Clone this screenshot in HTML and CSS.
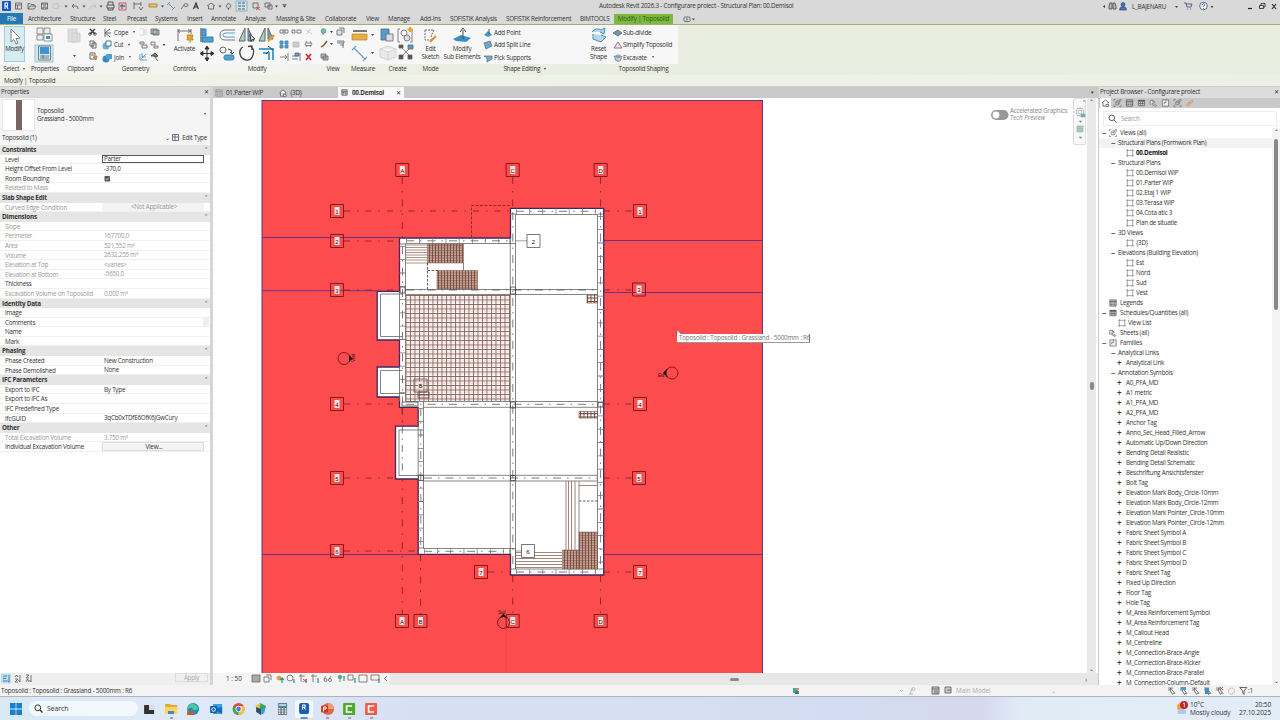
FILE: index.html
```html
<!DOCTYPE html>
<html lang="en">
<head>
<meta charset="utf-8">
<title>Autodesk Revit 2026.3</title>
<link rel="stylesheet" href="styles.css">
</head>
<body>
<svg class="defs" width="0" height="0">
  <defs>
    <symbol id="view" viewBox="0 0 9 9"><path d="M1.5.5v8M7.5.5v8M.5 1.5h8M.5 7.5h8" fill="none" stroke="#777" stroke-width=".9"/><path d="M2 2h5v5H2z" fill="#fff"/></symbol>
    <symbol id="views" viewBox="0 0 9 9"><path d="M.5 2.500v-2h2M6.500.5h2v2M8.500 6.500v2h-2M2.500 8.500h-2v-2M2.500 3.500h3v3h-3zl1.500-1.500h3l-1.500 1.500M7 2v3L5.500 6.500" fill="none" stroke="#666" stroke-width=".7"/></symbol>
    <symbol id="legend" viewBox="0 0 9 9"><path d="M1 1h7v7H1zM1 3h7" fill="#ccc" stroke="#555" stroke-width=".9"/><path d="M2 4.500h2M5 4.500h2M2 6.200h2M5 6.200h2" stroke="#555" stroke-width=".8"/></symbol>
    <symbol id="table" viewBox="0 0 9 9"><path d="M1 1.500h7v6H1zM3.300 3v4.500M5.700 3v4.500M1 5h7" fill="#ddd" stroke="#555" stroke-width=".8"/><path d="M1 1.200h7V3H1z" fill="#555"/></symbol>
    <symbol id="sheet" viewBox="0 0 9 9"><path d="M.8 6.500v-5h3l2 2v1M5.800 3.500h-2v-2M3 4.500l5 3-1 1-4-2z" fill="#eee" stroke="#666" stroke-width=".8"/></symbol>
    <symbol id="family" viewBox="0 0 9 9"><path d="M1 1h7v7H1zM5 1v3H3v2" fill="#f2f2f2" stroke="#666" stroke-width=".8"/></symbol>
    <symbol id="home" viewBox="0 0 9 9"><path d="M.5 4.500L4.500 1l4 3.500M1.700 4v4h3M7.300 4v1M5 6h3v2.300H5z" fill="#fff" stroke="#444" stroke-width=".8"/></symbol>
    <symbol id="filter" viewBox="0 0 9 9"><path d="M1 2h5M1 4h3M3.500 2v3l2 3.500 1-1.500 1.500.5z" fill="#eee" stroke="#666" stroke-width=".8"/></symbol>
  </defs>
</svg>
<div class="app">
  <header class="title">
    <svg class="quick" width="292" height="12" fill="none" stroke="#555" stroke-width=".8">
      <rect x="2" y="1" width="9" height="10" rx="1" fill="#1559c0" stroke="none"/><path d="M5 9V3h2.500v3H5M6.500 6L8 9" stroke="#fff" stroke-width="1.100"/>
      <path d="M15.500 3h6v6h-6zM15.500 5h6M17.500 5v4M28 9V3.500h2l1 1h3V6M28 9l2-3h6l-2 3zM41.500 3h6v6h-6zM43 3v2h3V3M43 9V7h3v2"/>
      <path d="M53 8V4h3l2-1v6zM58 5l2 2" stroke="#bbb"/><path d="M72 6l2-2M72 6l2 2M72 6h4q2 0 2 3"/><path d="M96 6l-2-2M96 6l-2 2M96 6h-4q-2 0-2 3" stroke="#bbb"/>
      <path d="M107 5h7v3h-7zM108 5V2h5v3M108 8v2h5V8" stroke-width="1"/><path d="M119 3h7v7h-7z" stroke="#d33"/><path d="M120 6h5M122 4v5" stroke="#3576af" stroke-width="1.300"/>
      <path d="M134 4h7M134 2v7M141 2v4M139 7l2 3 2-3"/><path d="M149 4h8v3h-8z" fill="#eec56a" stroke="#9b7a36"/><path d="M168 3l6 6M167 5l3-3M172 10l3-3" stroke="#3f83b5"/><path d="M181 9l3-4M184 5a2 1.500 0 1 1 0 .1"/>
      <path d="M193.500 9l2.500-6 2.300 6M194.300 7h3.200" stroke="#333" stroke-width="1.200"/>
      <path d="M207 6l4-3 4 3M208.500 5.500V9h5V5.500M226 6l2.500-3L231 6l-2.500 3zM228.500 8v2"/><path d="M236 1h11v10h-11z" fill="#cbe5ef" stroke="#78abc0"/><path d="M238 3h3M238 6h3M238 9h3M242 3h3M242 6h3M242 9h3" stroke="#333"/>
      <path d="M253 3h5v5h-5zM265 3h5v4h-5zM268 5h4v4h-4z"/><path d="M256 7l4 3M260 7l-4 3" stroke="#d33"/>
      <path d="M64.500 5.500h3l-1.500 2zM82.500 5.500h3l-1.500 2zM99.500 5.500h3l-1.500 2zM161 5.500h3l-1.500 2zM218.500 5.500h3l-1.500 2zM275 5.500h3l-1.500 2zM282.500 5.500h4l-2 2z" fill="#444" stroke="none"/><path d="M282.500 4.500h4"/>
    </svg>
    <span class="doc">Autodesk Revit 2026.3 - Configurare proiect - Structural Plan: 00.Demisol</span>
    <svg width="32" height="12"><path d="M3 5l-2 1.500L3 8z" fill="#333"/><path d="M7 9V6l1-3h2v6zM11 9V3h2l1 3v3z" fill="#bbb" stroke="#444" stroke-width=".8"/><circle cx="21" cy="4.500" r="2" fill="#5271ac" stroke="#24427d" stroke-width=".6"/><path d="M17.500 10q0-3.500 3.500-3.500t3.500 3.500z" fill="#5271ac" stroke="#24427d" stroke-width=".6"/></svg>
    <span class="user">L_BAJENARU</span>
    <svg width="110" height="12" fill="none" stroke="#444" stroke-width=".8"><path d="M6 6h3l-1.500 2z" fill="#444" stroke="none"/><path d="M15 3h2l1 4h4l1-3h-6M18 9h1M21 9h1" stroke="#3b4777"/><circle cx="34.500" cy="6" r="3.800" fill="#f3f5fa" stroke="#3b5277"/><path d="M33.300 5q0-1.300 1.200-1.300t1.200 1-1.200 1.500v.8M34.500 8v.8" stroke="#2c559b"/><path d="M41.500 6h3l-1.500 2z" fill="#444" stroke="none"/><path d="M79 8.500h4" stroke="#222" stroke-width="1.200"/><path d="M90.500 5.500h4v3h-4zM92 5V3.500h4V7h-1" stroke="#222"/><path d="M103 4l4 5M107 4l-4 5" stroke="#222" stroke-width="1.100"/></svg>
  </header>
  <nav class="tabs">
    <b class="file">File</b><span style="width:42px">Architecture</span><span style="width:33px">Structure</span><span style="width:24px">Steel</span><span style="width:28px">Precast</span><span style="width:32px">Systems</span><span style="width:24px">Insert</span><span style="width:34px">Annotate</span><span style="width:31px">Analyze</span><span style="width:49px">Massing &amp; Site</span><span style="width:41px">Collaborate</span><span style="width:22px">View</span><span style="width:32px">Manage</span><span style="width:30px">Add-Ins</span><span style="width:56px">SOFiSTiK Analysis</span><span style="width:74px">SOFiSTiK Reinforcement</span><span style="width:34px">BIMTOOLS</span><b class="context">Modify | Toposolid</b>
    <svg width="24" height="12" fill="none" stroke="#555" stroke-width=".8"><rect x="11" y="4" width="6" height="4.500" rx="1"/><path d="M13.500 5l1.500 1.200-1.500 1.300zM19 5.500h3l-1.500 2z" fill="#444" stroke="none"/></svg>
  </nav>
  <section class="ribbon">
    <div class="panel" style="width:28px"><div class="body"><div class="modify"><svg width="18" height="18"><path d="M5 2v13l3-2.500 2 4.500 2-1-2-4.500 4-.5z" fill="#fff" stroke="#666" stroke-width=".8"/></svg>Modify</div></div><h4>Select <i></i></h4></div>
    <div class="panel" style="width:34px"><div class="body"><svg width="34" height="39"><rect x="7" y="20" width="18" height="17" fill="#cfe8f2" stroke="#8bbdd2" stroke-width=".8"/><path d="M9 3h6v6H9zM16 3h6v6h-6zM9 10h6v5H9z" fill="#eee" stroke="#777" stroke-width=".8"/><path d="M16 9h8v7h-8z" fill="#fff" stroke="#777" stroke-width=".8"/><path d="M18 11h4v3h-4zM12 22h9v7h-9z" fill="#3d94d1"/><path d="M10.500 21h12v14h-12zM12 31h9M12 33h9M15 30v4" fill="none" stroke="#666" stroke-width=".8"/></svg></div><h4>Properties</h4></div>
    <div class="panel" style="width:37px"><div class="body"><svg width="37" height="39" fill="none" stroke="#444" stroke-width=".8"><path d="M6 4h9v13H6zM10 8h8v9h-8z" fill="#ddd" stroke="#ccc"/><path d="M11 30h3l-1.500 2z" fill="#444" stroke="none"/><path d="M28 4l5 5M33 4l-5 5" stroke-width="1.500"/><circle cx="28" cy="9" r="1.300"/><circle cx="33" cy="9" r="1.300"/><path d="M28 16h4v5h-4zM30 18h4v5h-4zM28 28h5v6h-5zM29 30h3" fill="#fff"/><path d="M31 32l4-1-1 4z" fill="#d8a638" stroke="#a77d20"/></svg></div><h4>Clipboard</h4></div>
    <div class="panel" style="width:73px"><div class="body geo">
      <div class="cmds"><p><svg width="14" height="10"><path d="M5 1v8M5 5l5-4M5 5l5 4M5 5h6" fill="none" stroke="#666"/></svg>Cope<i></i></p><p><svg width="14" height="10"><circle cx="6" cy="6" r="3.500" fill="#72add0"/><path d="M6 1h5v5H6z" fill="#fff" stroke="#477891"/></svg>Cut<i></i></p><p><svg width="14" height="10"><circle cx="6" cy="6" r="3.500" fill="#348bc4"/><path d="M6 1h6v5H6z" fill="#4f9fcf"/></svg>Join<i></i></p></div>
      <svg width="34" height="39" fill="none" stroke="#666" stroke-width=".8"><path d="M4 4h4v6H4M10 4v6" stroke="#ccc"/><path d="M15 4h6v5h-6zM17 5h6v5h-6z" fill="#aac9d6"/><path d="M4 17h4v2H4zM6 20h5v3H6zM15 17h4v3h-4zM18 21h4v2h-4z" fill="#eee"/><path d="M26.500 19h3l-1.500 2z" fill="#444" stroke="none"/><path d="M4 29v6h7M5 34l5-5M6 28v4h4" stroke="#438bc0"/><path d="M15 31l4-3 3 3-2 1-2-1zM18 31l4 5" stroke="#444" fill="#777"/></svg>
    </div><h4>Geometry</h4></div>
    <div class="panel" style="width:25px"><div class="body big"><svg width="20" height="19" fill="none" stroke="#666" stroke-width=".9"><path d="M3 3v12M16 3v5M3 5h12M5 3.500L3 5l2 1.500M13 3.500L16 5l-3 1.500"/><path d="M12 9h6l-1 4h1v1h-6v-1h1zM15 14v3" fill="#e8a82d" stroke="#bd861f"/></svg>Activate</div><h4>Controls</h4></div>
    <div class="panel" style="width:120px"><div class="body"><svg width="120" height="39" fill="none" stroke="#666" stroke-width="1">
      <path d="M4 3v14" stroke="#333"/><path d="M5 4h4v7H5zM5 12h11v5H5z" fill="#4ba0d4" stroke="#3a7cac"/>
      <path d="M38 5H28q-5 0-5 5t5 5h10" stroke="#777"/><path d="M38 8H29q-3 0-3 2t3 2h9" stroke="#53a3cc"/>
      <path d="M48 3v13h-6z" fill="#a7d0c4"/><path d="M51 3v13h6z" fill="#62a6cf"/><path d="M53 9l5 5-3 .5-1 2z" fill="#ddd" stroke="#444"/>
      <path d="M68 3v13h-6z" fill="#a7d0c4"/><path d="M71 3v11h5z" fill="#62a6cf"/><path d="M71 16l6-6" stroke="#e19c27" stroke-width="2.500"/>
      <path d="M10 22v13M3.500 28.500h13M10 21l-2 3h4zM10 36l-2-3h4zM3 28.500l3-2v4zM17 28.500l-3-2v4z" stroke="#333" fill="#333"/>
      <circle cx="26" cy="25" r="3"/><path d="M31 24q4 0 4 4M33 27l2 2 2-2" stroke="#444"/><rect x="27" y="30" width="10" height="5" rx="2" fill="#4da5d4" stroke="#3b84b0"/>
      <path d="M46 22q-4 2-3 7t6 6 7-5-2-8M51 21.500l4-.5v4" stroke="#444" stroke-width="1.300"/>
      <path d="M62 24h14v11M66 28h6v7" stroke="#4ba0d4" stroke-width="2"/><path d="M71 21l5 4M72 26l-3 3" stroke="#444"/>
      <g stroke-width=".8"><path d="M83 5h3v3h-3zM88 5h3v3h-3zM87 4v6M95 5h3v3h-3zM100 5h4v3h-4z"/><path d="M109 5l6 4M110 9l3-5" stroke="#bbb"/><path d="M83 16h3v3h-3zM88 16h3v3h-3zM83 20h3v3h-3zM88 20h3v3h-3z" fill="#57a3d1" stroke="#3a7cac"/><path d="M96 17h6v5h-6z" fill="#ccc" stroke="#bbb"/><path d="M109 18h5M109 20.500h5M110 16l-2 3 2 3M113 16l2 3-2 3"/><path d="M83 32h6M91 28v8M88 30l2 2-2 2M95 31h6M95 34h6M103 28v8"/><path d="M98 28h4v3h-4z" fill="#57a3d1"/><path d="M109 29l5 6M114 29l-5 6" stroke="#dd252d" stroke-width="1.600"/></g>
    </svg></div><h4>Modify</h4></div>
    <div class="panel" style="width:32px"><div class="body"><svg width="32" height="39" fill="none" stroke="#666" stroke-width=".8"><circle cx="6.500" cy="6" r="2.300" fill="#73c5a2" stroke="#429273"/><path d="M6 8v2"/><path d="M4 22l3-2 3-4" stroke="#775631" stroke-width="1.500"/><path d="M4 29h5v4H4zM6 31h5v4H6z" fill="#bbb"/><path d="M13 6h3l-1.500 2zM13 18h3l-1.500 2z" fill="#444" stroke="none"/><path d="M20 5h5v5h-5zM22 3h5v5M20 16h7v2h-7M23 20h4M26 18v5" fill="#d2e3e9"/></svg></div><h4>View</h4></div>
    <div class="panel" style="width:28px"><div class="body"><svg width="28" height="39"><path d="M4 5h14v2H4z" fill="#777"/><path d="M3 9h15v6H3z" fill="#e6ae43" stroke="#b9882e" stroke-width=".7"/><path d="M5 23l11 11M3 25l4-4M14 36l4-4" stroke="#65a4c9" stroke-width="1.200"/><path d="M22 9h3l-1.500 2zM22 27h3l-1.500 2z" fill="#444"/></svg></div><h4>Measure</h4></div>
    <div class="panel" style="width:41px"><div class="body"><svg width="41" height="39" fill="none" stroke="#666" stroke-width=".8"><path d="M4 4h8v11H4z" fill="#4f9ed0"/><path d="M9 9h7v7H9z" fill="#ddd"/><path d="M23 4h-2v13h2M33 4h2v13h-2"/><circle cx="27" cy="8" r="3"/><circle cx="30" cy="13" r="3" fill="#ddd"/><path d="M33 2v5M30.500 4.500h5" stroke="#e8a22c" stroke-width="2"/><path d="M3 24l8-3 8 3v8l-8 3-8-3zM3 24l8 3 8-3M11 27v8" fill="#e9e9e9" stroke="#ccc"/><path d="M24 22l10 10M34 22L24 32"/><path d="M22 20h4v3h-4zM31 30h4v4h-4zM22 30h4v4h-4z" fill="#555"/><path d="M31 20h5v4h-5z" fill="#4ba0d4"/></svg></div><h4>Create</h4></div>
    <div class="panel" style="width:25px"><div class="body big"><svg width="20" height="19"><path d="M4 4h9l-3 6 2 4H4z" fill="none" stroke="#666" stroke-dasharray="2 1"/><path d="M9 16l6-6" stroke="#dc8e38" stroke-width="2.200"/></svg>Edit<br>Sketch</div><h4>Mode</h4></div>
    <div class="panel" style="width:143px"><div class="body shape"><div class="big wide"><svg width="20" height="19"><path d="M1 13l8-4 10 3-5 4-10-1z" fill="#388ec6"/><path d="M11 4v9M8 6l3-4 3 4" fill="none" stroke="#555"/></svg>Modify<br>Sub Elements</div>
      <div class="cmds"><p><svg width="12" height="10"><path d="M2 7l4-4 4 4-4 2z" fill="#4496cb"/><path d="M7 1v5" stroke="#555"/></svg>Add Point</p><p><svg width="12" height="10"><path d="M2 3l6-2 2 5-6 3z" fill="#6ca8cc" stroke="#506b7a" stroke-width=".7"/></svg>Add Split Line</p><p><svg width="12" height="10"><path d="M2 3h8v3l-5 3V5z" fill="#77abc8" stroke="#506b7a" stroke-width=".7"/></svg>Pick Supports</p></div></div><h4 class="shapecap">Shape Editing <i></i></h4></div>
    <div class="panel" style="width:92px"><div class="body shape"><div class="big narrow"><svg width="20" height="19"><path d="M3 6q4-5 9-2l4-2-1 6-4-2M4 8v5l8 3 5-5-5-2" fill="#b7d7e8" stroke="#3f91c1"/></svg>Reset<br>Shape</div>
      <div class="cmds"><p><svg width="11" height="10"><path d="M1 5l5-3 4 3-4 3z" fill="#7695a7" stroke="#466273" stroke-width=".7"/></svg>Sub-divide</p><p><svg width="11" height="10"><path d="M2 8l4-6 4 6z" fill="#e3e9ec" stroke="#99767a"/></svg>Simplify Toposolid</p><p><svg width="11" height="10"><circle cx="6" cy="5" r="3.500" fill="#81abc1"/><path d="M2 3l4 2 4-2-2 5H5z" fill="#ced7dd" stroke="#668492" stroke-width=".7"/></svg>Excavate<i></i></p></div></div><h4 class="topo">Toposolid Shaping</h4></div>
  </section>
  <div class="options">Modify | Toposolid</div>
  <main class="work">
    <aside class="props">
      <div class="phead">Properties<span>✕</span></div>
      <div class="type"><div class="swatch"><i></i></div><p>Toposolid<br>Grassland - 5000mm</p><i class="tri"></i></div>
      <div class="instance"><span>Toposolid (1)</span><em>⌄</em><svg width="9" height="9"><path d="M1.500 1.500h6v6h-6zM1.500 4h6M4 1.500v6" fill="none" stroke="#556" stroke-width=".8"/></svg>Edit Type</div>
      <div class="grid">
        <h5>Constraints<s>⌃</s></h5>
        <dl><dt>Level</dt><dd class="edit">Parter</dd></dl><dl><dt>Height Offset From Level</dt><dd>-370,0</dd></dl><dl><dt>Room Bounding</dt><dd><svg width="7" height="7"><rect x=".5" y="1" width="5.500" height="5.500" rx=".7" fill="#555"/><path d="M1.500 3.700l1.300 1.300 2-2.500" fill="none" stroke="#fff" stroke-width=".7"/></svg></dd></dl><dl class="off"><dt>Related to Mass</dt><dd></dd></dl>
        <h5>Slab Shape Edit<s>⌃</s></h5>
        <dl class="off"><dt>Curved Edge Condition</dt><dd class="na">&lt;Not Applicable&gt;</dd></dl>
        <h5>Dimensions<s>⌃</s></h5>
        <dl class="off"><dt>Slope</dt><dd></dd></dl><dl class="off"><dt>Perimeter</dt><dd>167700,0</dd></dl><dl class="off"><dt>Area</dt><dd>521,552 m²</dd></dl><dl class="off"><dt>Volume</dt><dd>2632,255 m³</dd></dl><dl class="off"><dt>Elevation at Top</dt><dd>&lt;varies&gt;</dd></dl><dl class="off"><dt>Elevation at Bottom</dt><dd>-5650,0</dd></dl><dl><dt>Thickness</dt><dd></dd></dl><dl class="off"><dt>Excavation Volume on Toposolid</dt><dd>0.000 m³</dd></dl>
        <h5>Identity Data<s>⌃</s></h5>
        <dl><dt>Image</dt><dd></dd></dl><dl><dt>Comments</dt><dd class="more"></dd></dl><dl><dt>Name</dt><dd></dd></dl><dl><dt>Mark</dt><dd></dd></dl>
        <h5>Phasing<s>⌃</s></h5>
        <dl><dt>Phase Created</dt><dd>New Construction</dd></dl><dl><dt>Phase Demolished</dt><dd>None</dd></dl>
        <h5>IFC Parameters<s>⌃</s></h5>
        <dl><dt>Export to IFC</dt><dd>By Type</dd></dl><dl><dt>Export to IFC As</dt><dd></dd></dl><dl><dt>IFC Predefined Type</dt><dd></dd></dl><dl><dt>IfcGUID</dt><dd>3qCb0xTDfE6OfK6JGwCury</dd></dl>
        <h5>Other<s>⌃</s></h5>
        <dl class="off"><dt>Total Excavation Volume</dt><dd>3.750 m³</dd></dl><dl><dt>Individual Excavation Volume</dt><dd class="btn">View...</dd></dl>
      </div>
      <footer><svg width="36" height="11" fill="none" stroke="#555" stroke-width=".8"><path d="M1 .5h10v10H1z" fill="#b9dff0" stroke="none"/><path d="M3 3h4M3 5.500h3M3 8h4M9 2v7M7.500 7.500L9 9.500" stroke="#246a99"/><path d="M15 4l1.500-2L18 4M15 6h3l-3 3h3M20 2v7l-1.500-2M26 2h3l-3 3h3M26 9l1.500-3L29 9M31 2v7l-1.500-2"/></svg><b>Apply</b></footer>
    </aside>
    <section class="center">
      <div class="vtabs"><svg width="10" height="9"><use href="#legend" opacity=".5"/></svg><span class="t1">01.Parter WIP</span><svg width="10" height="9"><use href="#home"/></svg><span class="t2">{3D}</span><div class="active"><svg width="9" height="9"><use href="#legend"/></svg><b>00.Demisol</b><span>✕</span></div><em>▾</em></div>
      <div class="canvas">
        <svg class="plan" width="860" height="575" viewBox="213 98 860 575">
          <defs>
            <pattern id="tile" width="4.500" height="4.500" patternUnits="userSpaceOnUse" x="405.500" y="295"><path d="M0 .5h4.500" stroke="#8b5a4b" stroke-width=".9"/><path d="M0 2.700h4.500" stroke="#d9b8ac" stroke-width=".6"/><path d="M.5 0v4.500" stroke="#7b5b52" stroke-width=".8"/></pattern>
            <pattern id="stair" width="3" height="2.500" patternUnits="userSpaceOnUse"><rect width="3" height="2.500" fill="#c9a496"/><path d="M0 .5h3" stroke="#8a6153" stroke-width=".8"/><path d="M.5 0v2.500" stroke="#6e493d" stroke-width=".8"/></pattern>
            <pattern id="mesh" width="3.500" height="3.500" patternUnits="userSpaceOnUse" x="587" y="294"><rect width="3.500" height="3.500" fill="#fff"/><path d="M0 .5h3.500M.5 0v3.500" stroke="#6e493d" stroke-width="1"/></pattern>
          </defs>
          <rect x="262" y="100.500" width="500.500" height="580" fill="#fd4c4e" stroke="#5b397d"/>
          <path d="M262 237.500h137M262 290.700h115M604 240.500h158M604 292.500h158M262 554.500h156M604 554.500h158" stroke="#6b3188" fill="none"/>
          <g stroke="#8c2425" fill="none" stroke-width=".9"><path d="M344 211h168M344 241h56M344 290h56M344 404h56M344 478h74M344 551h74M488 572h22M604 211h28M604 290h28M604 404h28M604 478h28M604 572h28" stroke-dasharray="6 7 1.500 7"/><path d="M402.300 177v60M402.300 407v207M420.500 554v60M512.700 177v31M512.700 575v39M600.500 177v31M600.500 575v39" stroke-dasharray="7 7 1.500 7"/><path d="M510 205.500h-38.500V238" stroke-dasharray="3 1.500"/></g>
          <path d="M399.500 238H510.500V208.300H603.700V575H510.500V554.300H418.200V479H395.500V426.200H418.200V407.300H399.500V397H377.200V367H399.500V340H377.200V291.300H399.500Z" fill="#fff" stroke="#42265f" stroke-width="1.300"/>
          <g fill="none" stroke="#666" stroke-width=".8">
            <path d="M405.500 401V243.500H515.500V214.500H597.500V569H515.500V548.500H423.500V401M405.500 401.500H597.500M405.500 289.500H597.500M405.500 294.500H597.500M423.500 407.300H597.500M423.500 475.300H597.500M423.500 481H597.500M510.300 238V554M515.500 243V569M399.500 291V340M399.500 367V401M418.200 407V479M380.500 294v42.500h22M380.500 294h22M380.500 370.500h22M380.500 370.500v23h24M399 430V475.500h20M399 430h24"/>
            <path d="M399.500 244h6M510 238v6M510 214h6M597.500 214h6M597.500 569h6M510 569h6M418 548h6M510 548v6"/>
          </g>
          <g stroke="#444" fill="none">
            <path d="M402.500 246V402M420.800 408v140M512.800 212V570M600.600 212V570" stroke-width=".7" stroke-dasharray="8 6 1.500 6"/>
            <path d="M406 240.800H510M516 211.300H597M406 290H597M406 404.300H597M424 478H597M424 551.300H510M516 572H597" stroke-width=".7" stroke-dasharray="8 6 1.500 6"/>
            <g stroke="#777"><path d="M406 241H510M516 211.500H597M424 551.500H510M516 572H597" stroke-width="6" stroke-dasharray=".7 12.500"/><path d="M402.500 246V402M420.800 408V548M600.600 216V568" stroke-width="6" stroke-dasharray=".8 12.500"/></g>
            <path d="M510.500 287h5v7h-5zM510.500 402h5v6h-5zM510.500 475.500h5v5h-5zM598 402h5v5h-5zM400 287h5v6h-5zM418.500 475.500h5v5h-5zM402 402h16v4h-16z" stroke-width=".8"/>
            <path d="M402.300 408V475" stroke-width=".7" stroke-dasharray="7 5 1.500 5"/>
          </g>
          <rect x="405.500" y="295" width="104.500" height="106" fill="url(#tile)"/>
          <path d="M406 245h22M406 247.500h22M406 250h22M406 252.500h22M406 255h22M406 257.500h22M406 260h22M406 263h22" stroke="#9b7567" stroke-width=".8"/>
          <path d="M427.500 244H463.500V263H427.500zM437 270.500h40.500V289H437zM562.500 550H579V569H562.500zM579 532H597.500V569H579z" fill="url(#stair)" stroke="#7a564a" stroke-width=".5"/>
          <path d="M587 295h10.500v8H587zM579 411.500h18.500V418H579z" fill="url(#mesh)" stroke="#6e493d" stroke-width=".6"/>
          <path d="M427.500 263v26M427.500 270.500h10M579 501h18.500" fill="none" stroke="#333" stroke-width=".8" stroke-dasharray="2.500 1.500"/><path d="M463.500 263v7.500" stroke="#555" stroke-width=".7"/>
          <path d="M566 481v69M568.500 481v69M571.500 481v69M575 481v69M579 481v69M579 485.500h18.500M516 552.500h46M516 555.500h46M516 558.500h46M516 561.500h46M516 564.500h46M516 567.500h46" fill="none" stroke="#8b665b" stroke-width=".8"/>
          <path d="M516 240.800h11M516 551h6" stroke="#777" stroke-width=".7"/>
          <g fill="none" stroke="#87191b"><path d="M395.800 163.500h13v13h-13zM506.200 163.500h13v13h-13zM594.200 163.500h13v13h-13zM330.500 204.500h13v13h-13zM330.500 234.500h13v13h-13zM330.500 283.500h13v13h-13zM330.500 397.500h13v13h-13zM330.500 471.500h13v13h-13zM330.500 544.500h13v13h-13zM474.500 565.500h13v13h-13zM633.500 204.500h13v13h-13zM632.500 283h13v13h-13zM633.500 397.500h13v13h-13zM632.500 471.500h13v13h-13zM633.500 565.500h13v13h-13zM395.500 614.500h13v13h-13zM414 614.500h13v13h-13zM506.200 614.500h13v13h-13zM594.200 614.500h13v13h-13z"/></g>
          <path d="M527 234.500h13v13h-13zM521.500 544.500h13v13h-13z" fill="#fff" stroke="#555" stroke-width=".8"/><path d="M414 379h13v13h-13z" fill="none" stroke="#765046" stroke-width=".8"/><path d="M418 392h11v6h-11zM418 395h11" fill="none" stroke="#6b4439" stroke-width=".8"/>
          <path d="M399.800 166h5v8h-5zM510.200 166h5v8h-5zM598.200 166h5v8h-5zM334.500 207h5v8h-5zM334.500 237h5v8h-5zM334.500 286h5v8h-5zM334.500 400h5v8h-5zM334.500 474h5v8h-5zM334.500 547h5v8h-5zM478.500 568h5v8h-5zM637.500 207h5v8h-5zM636.500 285.500h5v8h-5zM637.500 400h5v8h-5zM636.500 474h5v8h-5zM637.500 568h5v8h-5zM399.500 617h5v8h-5zM418 617h5v8h-5zM510.200 617h5v8h-5zM598.200 617h5v8h-5zM418 381.500h5v8h-5z" fill="#fbe6e2"/>
          <g class="gt"><text x="402.300" y="172.500">A</text><text x="512.700" y="172.500">C</text><text x="600.700" y="172.500">D</text><text x="337" y="213.500">1</text><text x="337" y="243.500">2</text><text x="337" y="292.500">3</text><text x="337" y="406.500">4</text><text x="337" y="480.500">5</text><text x="337" y="553.500">6</text><text x="481" y="574.500">7</text><text x="640" y="213.500">1</text><text x="639" y="292">3</text><text x="640" y="406.500">4</text><text x="639" y="480.500">5</text><text x="640" y="574.500">7</text><text x="402" y="623.500">A</text><text x="420.500" y="623.500">B</text><text x="512.700" y="623.500">C</text><text x="600.700" y="623.500">D</text><text x="533.500" y="243.500">2</text><text x="528" y="553.500">6</text><text x="420.500" y="388">B</text></g>
          <g fill="none" stroke="#731416" stroke-width=".9"><circle cx="344" cy="358.500" r="6"/><circle cx="672" cy="373" r="6"/><circle cx="503.500" cy="622.500" r="6"/><path d="M506 629v44" stroke="#e53d40" stroke-width=".6"/></g>
          <path d="M349 355l4 3.500-4 3.500zM667.500 368l-4.500 5 4.500 5-1.500-5zM499.500 618l4-4.500 4 4.500-4-1z" fill="#211"/>
          <g class="tiny"><text x="498" y="614">Sud</text><text x="658" y="377">Est</text><text transform="translate(355 362) rotate(-90)">Vest</text></g>
          <path d="M677 329.500v7l4.500-2z" fill="#fff" stroke="#555" stroke-width=".6"/>
          <g><rect x="991" y="110" width="17.500" height="10" rx="5" fill="#999"/><circle cx="996" cy="115" r="3.400" fill="#fff"/></g>
          <g class="accel"><text x="1010" y="113" textLength="57">Accelerated Graphics</text><text x="1010" y="120" textLength="35" font-style="italic">Tech Preview</text></g>
        </svg>
        <div class="tip">Toposolid : Toposolid : Grassland - 5000mm : R6</div>
        <div class="nav"><svg width="13" height="46" fill="none" stroke="#9bafb8" stroke-width=".8"><path d="M9 1l2 2M11 1L9 3"/><circle cx="6" cy="13" r="4"/><circle cx="6" cy="13" r="2"/><path d="M7 15h4v3H7z" fill="#6ba2be"/><path d="M5 22h3l-1.500 1.500z" fill="#777"/><path d="M3 27h6v6H3zM6 27v6M3 30h6" fill="#b5d4b5"/><path d="M5 38h3l-1.500 1.500z" fill="#777"/></svg></div>
        <div class="vscroll"><span>⌃</span><i></i><span>⌄</span></div>
      </div>
      <div class="vbar"><span>1 : 50</span><svg width="150" height="11" fill="none" stroke="#666" stroke-width=".8"><path d="M3 2h8v7H3z" fill="#aaa"/><path d="M15 4h5v5h-5zM17 2h5v5"/><circle cx="30" cy="5" r="2" fill="#e6a02e" stroke="#e6a02e"/><path d="M33 5v5M31 7l2-2 2 2M45 6v4M57 6v4M69 5v5M106 5v5M130 6v4M95 3v5" stroke="#2f9b93" stroke-width="1.300"/><circle cx="41" cy="5" r="3"/><path d="M50 3h6M52 1v8M62 3h6M64 1v8M99 2h5v5h-5zM110 2h8v7h-8zM122 2h8v5h-8z"/><path d="M54 6l4 3M58 6l-4 3" stroke="#d33"/><circle cx="76.500" cy="7" r="1.500"/><circle cx="81" cy="7" r="1.500"/><path d="M75 6l2-3M80 6l2-3"/><circle cx="91" cy="4" r="1.800" fill="#4ba999" stroke="#2f9b93"/><path d="M91 6v3M138 3l-2.500 2.500L138 8"/></svg><div class="hscroll"><i></i><span>›</span></div></div>
    </section>
    <aside class="browser">
      <div class="phead">Project Browser - Configurare proiect<span>✕</span></div>
      <div class="btools"><svg class="on"><use href="#home"/></svg><svg><use href="#views"/></svg><svg><use href="#legend"/></svg><svg><use href="#table"/></svg><svg><use href="#sheet"/></svg><svg><use href="#family"/></svg><svg><use href="#views"/></svg><svg viewBox="0 0 9 9"><path d="M1 6.500l3-3 1.500 1.500-3 3zM4 4l3-3 1.500 1.500-3 3z" fill="none" stroke="#e48650"/></svg></div>
      <div class="search"><svg width="9" height="9"><circle cx="3.800" cy="3.800" r="2.800" fill="none" stroke="#555"/><path d="M6 6l2.500 2.500" stroke="#555"/></svg>Search</div>
      <div class="treewrap"><ul class="tree">
        <li class="r"><b>−</b><svg><use href="#views"/></svg>Views (all)</li>
        <li class="g sel"><b>−</b>Structural Plans (Formwork Plan)</li>
        <li class="v cur"><svg><use href="#view"/></svg>00.Demisol</li>
        <li class="g"><b>−</b>Structural Plans</li>
        <li class="v"><svg><use href="#view"/></svg>00.Demisol WIP</li><li class="v"><svg><use href="#view"/></svg>01.Parter WIP</li><li class="v"><svg><use href="#view"/></svg>02.Etaj 1 WIP</li><li class="v"><svg><use href="#view"/></svg>03.Terasa WIP</li><li class="v"><svg><use href="#view"/></svg>04.Cota atic 3</li><li class="v"><svg><use href="#view"/></svg>Plan de situatie</li>
        <li class="g"><b>−</b>3D Views</li><li class="v"><svg><use href="#view"/></svg>{3D}</li>
        <li class="g"><b>−</b>Elevations (Building Elevation)</li>
        <li class="v"><svg><use href="#view"/></svg>Est</li><li class="v"><svg><use href="#view"/></svg>Nord</li><li class="v"><svg><use href="#view"/></svg>Sud</li><li class="v"><svg><use href="#view"/></svg>Vest</li>
        <li class="r"><b></b><svg><use href="#legend"/></svg>Legends</li><li class="r"><b>−</b><svg><use href="#table"/></svg>Schedules/Quantities (all)</li><li class="l"><svg><use href="#view"/></svg>View List</li><li class="r"><b></b><svg><use href="#sheet"/></svg>Sheets (all)</li><li class="r"><b>−</b><svg><use href="#family"/></svg>Families</li>
        <li class="g"><b>−</b>Analytical Links</li><li class="f"><b>+</b>Analytical Link</li><li class="g"><b>−</b>Annotation Symbols</li>
        <li class="f"><b>+</b>A0_PFA_MD</li><li class="f"><b>+</b>A1 metric</li><li class="f"><b>+</b>A1_PFA_MD</li><li class="f"><b>+</b>A2_PFA_MD</li><li class="f"><b>+</b>Anchor Tag</li><li class="f"><b>+</b>Anno_Sec_Head_Filled_Arrow</li><li class="f"><b>+</b>Automatic Up/Down Direction</li><li class="f"><b>+</b>Bending Detail Realistic</li><li class="f"><b>+</b>Bending Detail Schematic</li><li class="f"><b>+</b>Beschriftung Ansichtsfenster</li><li class="f"><b>+</b>Bolt Tag</li><li class="f"><b>+</b>Elevation Mark Body_Circle-10mm</li><li class="f"><b>+</b>Elevation Mark Body_Circle-12mm</li><li class="f"><b>+</b>Elevation Mark Pointer_Circle-10mm</li><li class="f"><b>+</b>Elevation Mark Pointer_Circle-12mm</li><li class="f"><b>+</b>Fabric Sheet Symbol A</li><li class="f"><b>+</b>Fabric Sheet Symbol B</li><li class="f"><b>+</b>Fabric Sheet Symbol C</li><li class="f"><b>+</b>Fabric Sheet Symbol D</li><li class="f"><b>+</b>Fabric Sheet Tag</li><li class="f"><b>+</b>Fixed Up Direction</li><li class="f"><b>+</b>Floor Tag</li><li class="f"><b>+</b>Hole Tag</li><li class="f"><b>+</b>M_Area Reinforcement Symbol</li><li class="f"><b>+</b>M_Area Reinforcement Tag</li><li class="f"><b>+</b>M_Callout Head</li><li class="f"><b>+</b>M_Centreline</li><li class="f"><b>+</b>M_Connection-Brace-Angle</li><li class="f"><b>+</b>M_Connection-Brace-Kicker</li><li class="f"><b>+</b>M_Connection-Brace-Parallel</li><li class="f"><b>+</b>M_Connection-Column-Default</li>
      </ul><div class="tscroll"><span>⌃</span><i></i><span>⌄</span></div></div>
    </aside>
  </main>
  <div class="status"><span class="msg">Toposolid : Toposolid : Grassland - 5000mm : R6</span>
    <svg width="165" height="12"><path d="M2 3h5v5H2z" fill="#4fa887"/><path d="M4 6h4v3H4z" fill="#3c7e9a"/><path d="M5 3h3v2H5z" fill="#e48557"/><path d="M109 5l1.500 1.500L112 5M119 9l2-5M121 4a1.500 1.500 0 1 1 0 .1M118 9h4" fill="none" stroke="#aaa" stroke-width=".8"/><path d="M141 2h7v7h-7zM141 4h7M143 6h4M143 8h4M154 2h6v6h-6zM156 5h4" fill="#ccc" stroke="#555" stroke-width=".8"/></svg>
    <span class="model">Main Model</span><em>⌄</em>
    <div class="filters"><svg><use href="#filter"/></svg><svg><use href="#filter"/><path d="M2 1h5v3H2z" fill="#4b9fc9"/></svg><svg><use href="#filter"/></svg><svg><use href="#filter"/><path d="M2 2h4v6H2z" fill="#428fc1"/></svg><svg><use href="#filter"/><path d="M5 1l3 3M8 1L5 4" stroke="#d33"/></svg><svg><circle cx="4.500" cy="5" r="3" fill="none" stroke="#aaa" stroke-dasharray="1.500 .8"/></svg><svg><path d="M.8 1.500h7L5 5v3.500L3.800 7V5z" fill="none" stroke="#555" stroke-width=".9"/></svg><span>:1</span></div>
  </div>
  <footer class="taskbar">
    <svg class="start" width="12" height="12"><path d="M0 0h5.600v5.600H0zM6.400 0H12v5.600H6.400zM0 6.400h5.600V12H0zM6.400 6.400H12V12H6.400z" fill="#1480ce"/></svg>
    <div class="tsearch"><svg width="9" height="9"><circle cx="3.800" cy="3.800" r="2.900" fill="none" stroke="#333"/><path d="M6 6l2.500 2.500" stroke="#333" stroke-width="1.200"/></svg>Search</div>
    <div class="apps">
      <svg viewBox="0 0 22 22"><path d="M6 7h5v5h5v4H6z" fill="#333"/><path d="M11 7h5v5h-5z" fill="#ddd"/></svg>
      <svg viewBox="0 0 22 22"><path d="M5 6h5l1 1h6v9H5z" fill="#e5a92e"/><path d="M5 9h12v7H5z" fill="#ffd55e"/><path d="M8 13h6v3H8z" fill="#3b8bd4"/><path d="M10 20h3" stroke="#777" stroke-width="1.200"/></svg>
      <svg viewBox="0 0 22 22"><circle cx="11" cy="11" r="6" fill="#188cca"/><path d="M6 8q4-5 9 0 3 5-4 4 0-4-6-1z" fill="#4cc69c"/><path d="M5 13h7v4H5z" fill="#ae6530"/></svg>
      <svg viewBox="0 0 22 22"><path d="M8 6h9v10H8z" fill="#35a0e4"/><path d="M8 11l9 5V9z" fill="#1668bd"/><rect x="5" y="8" width="7" height="7" rx="1" fill="#0f5caf"/><circle cx="8.500" cy="11.500" r="1.800" fill="none" stroke="#fff"/></svg>
      <svg viewBox="0 0 22 22"><circle cx="11.500" cy="11" r="6" fill="#e7483b"/><path d="M6.500 8a6 6 0 0 0 5 9l2-5z" fill="#38a352"/><path d="M11.500 17a6 6 0 0 0 5-9h-5z" fill="#f9c62d"/><circle cx="11.500" cy="11" r="2.800" fill="#3f7ee2" stroke="#fff"/></svg>
      <svg viewBox="0 0 22 22"><path d="M6 8l5-3v7z" fill="#eac22f"/><path d="M11 5l6 3-2 6-4-3z" fill="#2aa66b"/><path d="M7 9l5 2v6l-5-3z" fill="#314e65"/><path d="M12 11l4-1-1 5-3 2z" fill="#33a0d2"/></svg>
      <svg viewBox="0 0 22 22"><path d="M7 5h9v12H7z" fill="#647b89"/><path d="M8 6h7v2H8z" fill="#9ed6f2"/><path d="M8.500 10v6M11.500 10v6M14.500 10v6" stroke="#e8eef2" stroke-width="1.600" stroke-dasharray="1.500 .7"/></svg>
      <svg viewBox="0 0 22 22"><rect x="2" y="2" width="18" height="18" rx="2" fill="#f3f8fd"/><rect x="6" y="5" width="10" height="11" rx="2" fill="#155ebd"/><path d="M9.500 11.500V7H12v2.200H9.500M11 9.500l1.500 2" fill="none" stroke="#fff" stroke-width="1.100"/><path d="M7.500 20h7" stroke="#2873b5" stroke-width="1.500"/></svg>
      <svg viewBox="0 0 22 22"><circle cx="12" cy="11" r="6" fill="#e36842"/><path d="M12 5a6 6 0 0 1 6 6h-6z" fill="#f59a76"/><rect x="5" y="7.500" width="7" height="7" rx="1" fill="#bd3e20"/><path d="M7.500 13.500V9h2.500v2H7.500" fill="none" stroke="#fff"/><path d="M10 20h3" stroke="#777" stroke-width="1.200"/></svg>
      <svg viewBox="0 0 22 22"><rect x="5" y="5" width="12" height="12" rx="1" fill="#4da926"/><path d="M14 8H8.500v6H14" fill="none" stroke="#fff" stroke-width="1.700"/><path d="M10 20h3" stroke="#777" stroke-width="1.200"/></svg>
      <svg viewBox="0 0 22 22"><rect x="5" y="5" width="12" height="12" rx="1" fill="#f15a49"/><path d="M14 8H8.500v6H14" fill="none" stroke="#fff" stroke-width="1.700"/><path d="M10 20h3" stroke="#777" stroke-width="1.200"/></svg>
    </div>
    <svg class="weather" width="16" height="17"><circle cx="6" cy="7" r="4" fill="#f5a33e"/><path d="M3 14a2.500 2.500 0 0 1 1-4 3.500 3.500 0 0 1 6 0 2.200 2.200 0 0 1 0 4z" fill="#adc9ee"/><circle cx="9" cy="5" r="4" fill="#bd2828"/><path d="M8 3.500l1.300-.5v4" fill="none" stroke="#fff" stroke-width=".8"/></svg>
    <div class="temp">10°C<br>Mostly cloudy</div><div class="clock">20:50<br>27.10.2025</div>
  </footer>
</div>
</body>
</html>
```
FILE: styles.css
```css
* { box-sizing: border-box; margin: 0; padding: 0; }
body { width: 1280px; height: 720px; overflow: hidden; background: #fff; font: 6.300px/8px "Open Sans", "Noto Sans", sans-serif; letter-spacing: -.24px; color: #333; }
svg { display: block; flex: none; overflow: visible; }
.defs { position: absolute; }
em, i { font-style: normal; }
.app { display: flex; flex-direction: column; height: 720px; }
.app > * { flex: none; }

.title { height: 13px; display: flex; background: #d9d9d9; line-height: 11px; white-space: nowrap; }
.doc { margin-left: 307px; width: 503px; }
.user { width: 35px; line-height: 13px; margin-left: -2px; margin-right: 2px; }
.tabs { height: 12px; display: flex; background: #d9d9d9; border-bottom: 1px solid #a5ae76; line-height: 12px; white-space: nowrap; }
.tabs span { flex: none; }
.tabs b { font-weight: 400; text-align: center; }
.file { width: 23px; margin-right: 5px; background: #2479b0; color: #fff; }
.context { width: 59px; margin-top: 1px; height: 10px; line-height: 10px; background: #7cb93e; color: #2f5d17; }

.ribbon { height: 50px; display: flex; background: linear-gradient(90deg, #f3f4f1 0, #f2f4ef 270px, #e9eee0 450px); }
.panel { flex: none; display: flex; flex-direction: column; }
.body { height: 39px; background: #f6f7f6; display: flex; }
.panel h4 { font-weight: 400; text-align: center; line-height: 9px; white-space: nowrap; }
.panel h4.topo { padding-left: 23px; }
.panel h4.shapecap { padding-left: 20px; }
.panel i, .tri { display: inline-block; border: 1.5px solid transparent; border-top: 2px solid #444; border-bottom: 0; margin: 0 0 1.500px 5px; }
.panel h4 i { margin-left: 2px; }
.modify { width: 21px; height: 36px; margin: 1px 0 0 4px; background: #d7ebf3; border: 1px solid #a5cadb; display: flex; flex-direction: column; align-items: center; }
.big { display: flex; flex-direction: column; align-items: center; text-align: center; padding-top: 1px; line-height: 8px; white-space: nowrap; }
.wide { width: 38px; }
.narrow { width: 25px; }
.geo .cmds { width: 37px; }
.cmds { display: flex; flex-direction: column; padding: 2px 0 0 1px; }
.cmds p { height: 12.300px; display: flex; align-items: center; white-space: nowrap; }
.options { height: 12px; padding-left: 4px; line-height: 12px; background: linear-gradient(90deg, #f1f2e8, #edf1e5); border-bottom: 1px solid #cfd2ca; }

.work { height: 598px; display: flex; }
.phead { height: 11px; background: #dcdcdc; padding: 0 1px; line-height: 10px; display: flex; justify-content: space-between; }
.props { width: 213px; border-right: 3px solid #d5d5d5; background: #fff; display: flex; flex-direction: column; }
.type { height: 34px; background: #f5f5f5; display: flex; align-items: center; padding: 0 4px 0 2px; }
.swatch { width: 33px; height: 32px; background: #fff; border: 1px solid #e7e7e7; display: flex; justify-content: center; }
.swatch i { width: 6px; background: #796660; }
.type p { flex: 1; margin-left: 2px; }
.instance { height: 13px; background: #f5f5f5; display: flex; align-items: center; padding: 0 3px 2px 2px; gap: 2px; }
.instance span { flex: 1; }
.grid { flex: 1; }
.grid h5 { height: 9.600px; font-size: 6.300px; line-height: 9px; font-weight: 700; background: #e5e5e5; padding: 0 2px; display: flex; justify-content: space-between; letter-spacing: -.2px; }
.grid s { text-decoration: none; font-size: 5px; font-weight: 400; }
.grid dl { height: 9.600px; line-height: 9.200px; display: flex; border-bottom: .5px solid #f0f0f0; }
.grid dt { width: 102px; padding-left: 5px; white-space: nowrap; flex: none; }
.grid dd { width: 102px; padding-left: 2px; white-space: nowrap; display: flex; align-items: center; }
.grid .off { color: #999; }
.grid .edit { border: 1px solid #555; padding-left: 1px; }
.grid .na, .grid .btn { justify-content: center; background: #f3f3f3; }
.grid .btn { border: 1px solid #ddd; }
.grid .more { border-right: 6px solid #eee; width: 107px; }
.props footer { height: 12px; background: #efefef; display: flex; justify-content: space-between; }
.props footer b { width: 33px; height: 9px; margin-right: 2px; border: 1px solid #ddd; font-weight: 400; color: #aaa; text-align: center; line-height: 8px; }

.center { width: 885px; display: flex; flex-direction: column; }
.vtabs { height: 11px; background: #c9c9c9; display: flex; line-height: 11px; align-items: center; white-space: nowrap; padding-left: 2px; }
.vtabs > svg { width: 8px; height: 8px; }
.t1 { width: 56px; padding-left: 3px; }
.t2 { width: 51px; padding-left: 3px; }
.active { width: 66px; height: 11px; background: #f8f8f8; display: flex; align-items: center; padding: 0 3px; gap: 4px; }
.active svg { width: 7px; height: 7px; }
.active span { flex: 1; text-align: right; }
.vtabs em { margin-left: auto; padding-right: 4px; font-size: 5px; }
.canvas { height: 575px; display: flex; position: relative; }
.plan { overflow: hidden; }
.gt text { font: 6px "Liberation Sans", sans-serif; text-anchor: middle; fill: #221010; letter-spacing: 0; }
.tiny text { font: 4.500px "Liberation Sans", sans-serif; fill: #311; }
.accel text { font-size: 6.300px; fill: #888; }
.tip { position: absolute; left: 464px; top: 236px; width: 133px; height: 9px; padding-left: 2px; line-height: 8px; background: #fff; border-right: 1px solid #777; border-bottom: 1px solid #999; color: #777; white-space: nowrap; letter-spacing: -.2px; }
.nav { width: 13px; height: 47px; border: 1px solid #ddd; border-radius: 2px; background: #f8f8f8; }
.vscroll { width: 9px; margin-left: 1px; background: #e9e9e9; display: flex; flex-direction: column; align-items: center; }
.vscroll i { width: 4px; height: 8px; border-radius: 2px; background: #888; margin: 276px auto auto; }
.vbar { height: 12px; display: flex; background: #f5f5f5; line-height: 11px; }
.vbar > span { width: 36px; padding-left: 13px; white-space: nowrap; letter-spacing: 0; }
.hscroll { flex: 1; margin-left: -9px; background: #e7e7e7; display: flex; align-items: center; justify-content: space-between; padding: 0 11px 0 340px; }
.hscroll i { width: 9px; height: 3px; border-radius: 2px; background: #888; }

.browser { width: 182px; background: #fff; display: flex; flex-direction: column; border-left: 1px solid #ccc; }
.btools { height: 10px; background: #c9c9c9; display: flex; padding-left: 1px; gap: 1px; flex: none; }
.btools svg { width: 11px; height: 10px; padding: 1px; }
.btools .on { background: #fff; }
.search { height: 15px; flex: none; margin: 3px 3px 2px 4px; border: 1px solid #eee; display: flex; align-items: center; gap: 4px; padding-left: 4px; color: #999; }
.treewrap { flex: 1; min-height: 0; display: flex; overflow: hidden; }
.tree { list-style: none; width: 173px; }
.tree li { height: 10px; line-height: 10px; display: flex; align-items: center; white-space: nowrap; }
.tree svg { width: 8px; height: 8px; margin-right: 2px; }
.tree b { width: 7px; font-weight: 600; font-size: 8px; }
.tree .r { padding-left: 3px; }
.tree .r svg { margin-right: 3px; }
.tree .g { padding-left: 12px; }
.tree .v { padding-left: 27px; }
.tree .f { padding-left: 18px; }
.tree .f b { width: 9px; }
.tree .l { padding-left: 19px; }
.sel { background: #f3f3f3; }
.cur { font-weight: 700; color: #111; letter-spacing: -.3px; }
.tscroll { width: 8px; display: flex; flex-direction: column; align-items: center; background: #f4f4f4; }
.tscroll i { width: 4px; height: 171px; background: #888; border-radius: 2px; margin: 3px 0 auto; }

.status { height: 12px; display: flex; background: #f3f3f3; border-bottom: 1px solid #aeb5bd; line-height: 11px; white-space: nowrap; }
.msg { width: 791px; padding-left: 1px; letter-spacing: -.2px; }
.model { width: 95px; color: #aaa; letter-spacing: 0; }
.status em { width: 116px; color: #999; }
.filters { display: flex; gap: 3px; align-items: center; }
.filters svg { width: 9px; height: 9px; }
.filters span { margin-left: -3px; }
.taskbar { height: 23px; display: flex; align-items: center; background: linear-gradient(90deg, #d8e9f6 0, #dfe9f7 180px, #d7e0f3 430px, #d3dcf2 850px, #d5d8ee 980px, #e1ebf6 1020px, #e2edf7 1280px); }
.start { margin-left: 10px; }
.tsearch { margin-left: 7px; width: 109px; height: 15px; border-radius: 8px; background: #f3f8fc; display: flex; align-items: center; gap: 4px; padding-left: 5px; font-size: 7px; letter-spacing: -.1px; }
.apps { display: flex; }
.apps svg { width: 22.200px; height: 22px; }
.weather { margin-left: 793px; }
.temp { width: 48px; margin-left: -1px; font-size: 6.500px; white-space: nowrap; letter-spacing: -.1px; }
.clock { width: 33px; text-align: right; font-size: 6.500px; letter-spacing: -.1px; }
```
